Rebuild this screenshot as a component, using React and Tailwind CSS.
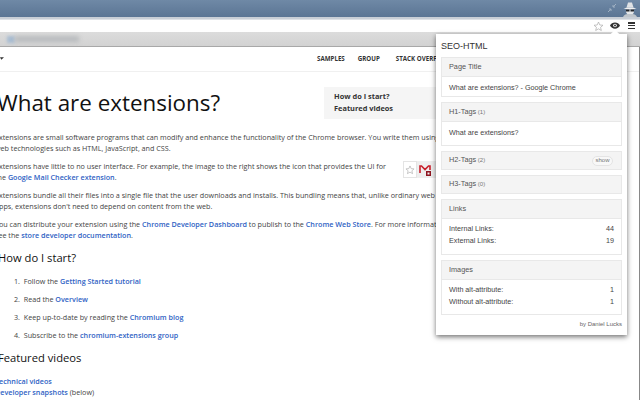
import React from 'react';

const Lnk = ({ children }) => <span className="font-semibold text-[#2f62c4]">{children}</span>;

const Section = ({ title, count, action, slim, className = '', children }) => (
    <div className="border border-[#e8e8e8]">
        <div className={`${slim ? 'h-[17px]' : 'h-[18px]'} bg-[#f4f4f4] flex items-center justify-between pl-[7px] pr-[8px] text-[#555] text-[7.3px]`}>
            <span>
                {title}
                {count && <span className="text-[6px] text-[#777]"> {count}</span>}
            </span>
            {action && (
                <span className="h-[10px] w-[21px] rounded-full border border-[#e4e4e4] bg-[#f8f8f8] flex items-center justify-center text-[6px] text-[#777]">
                    {action}
                </span>
            )}
        </div>
        {children && <div className={`border-t border-[#e8e8e8] px-[7px] text-[7.2px] text-[#444] ${className}`}>{children}</div>}
    </div>
);

const Row = ({ label, value }) => (
    <div className="flex justify-between h-[12px] items-center">
        <span>{label}</span>
        <span>{value}</span>
    </div>
);

const Popup = () => (
    <div className="absolute left-[436px] top-[34px] w-[191px] h-[301px] bg-white px-[5px] shadow-[0_2px_5px_rgba(0,0,0,0.55)] font-['Liberation_Sans',sans-serif]">
        {/* notch pointing at the toolbar icon */}
        <div className="absolute left-[176px] top-[-3px] w-[6px] h-[6px] rotate-45 bg-white" />
        <div className="h-[23px] flex items-center text-[9px] text-[#333] pt-[3px]">SEO-HTML</div>
        <div className="flex flex-col gap-[5px]">
            <Section title="Page Title" className="h-[20px] flex items-center pt-[3px]">What are extensions? - Google Chrome</Section>
            <Section title="H1-Tags" count="(1)" className="h-[24px] flex items-center">What are extensions?</Section>
            <Section title="H2-Tags" count="(2)" action="show" slim />
            <Section title="H3-Tags" count="(0)" slim />
            <Section title="Links" className="h-[36px] pt-[4px]">
                <Row label="Internal Links:" value="44" />
                <Row label="External Links:" value="19" />
            </Section>
            <Section title="Images" className="h-[35px] pt-[4px]">
                <Row label="With alt-attribute:" value="1" />
                <Row label="Without alt-attribute:" value="1" />
            </Section>
        </div>
        <div className="text-right text-[6px] text-[#666] mt-[5px]">by Daniel Lucks</div>
    </div>
);

const Star = ({ className }) => (
    <svg viewBox="0 0 16 16" className={className} fill="#fff" stroke="#a9a9a9" strokeWidth="1">
        <path d="M8 1.5l1.9 4.3 4.6.4-3.5 3 1.1 4.6L8 11.4l-4.1 2.4L5 9.2l-3.5-3 4.6-.4z" />
    </svg>
);

const BrowserChrome = () => (
    <div className="shrink-0">
        <div className="h-[17px] bg-gradient-to-b from-[#6f89a6] to-[#5b7594] flex justify-end items-start pr-[2px]">
            <svg viewBox="0 0 10 17" className="w-[10px] h-[17px]">
                <path d="M1 12l3-3M4 9H2M4 9v2M9 4L6 7M6 7h2M6 7V5" stroke="#9fb0c2" strokeWidth="1" fill="none" />
            </svg>
            <svg viewBox="0 0 16 17" className="w-[16px] h-[17px] ml-[5px]">
                <path d="M4.5 7.5L6 2.5h4l1.500 5z" fill="#dfe2e5" />
                <path d="M1.500 8.500c2-1.500 11-1.500 13 0-3 1-10 1-13 0z" fill="#f0f1f2" />
                <path d="M4 9.500h8v2c0 2-2 3.500-4 3.500s-4-1.500-4-3.500z" fill="#e6e8ea" />
                <rect x="4" y="9.500" width="3.500" height="2" fill="#22262c" />
                <rect x="8.500" y="9.500" width="3.500" height="2" fill="#22262c" />
                <path d="M1 17c1-2.500 3-3 7-3s6 .5 7 3z" fill="#bfc5cb" />
            </svg>
        </div>
        <div className="h-[3px] bg-[#c8ced6] border-b border-[#dfe2e6]" />
        <div className="h-[12px] bg-white flex items-center justify-end pr-[3px]">
            <Star className="w-[11px] h-[11px] mr-[6px]" />
            <svg viewBox="0 0 12 8" className="w-[10px] h-[7px] mr-[8px] mb-[1px]">
                <path d="M0 4c2-5 10-5 12 0-2 5-10 5-12 0z" fill="#333" />
                <circle cx="6" cy="4" r="2.2" fill="#fff" />
                <circle cx="6" cy="4" r="1.2" fill="#333" />
            </svg>
            <div className="w-[7px] h-[7px] mr-[2px] mb-[1px] flex flex-col justify-between">
                <div className="h-[1.5px] bg-[#333]" />
                <div className="h-[1.5px] bg-[#333]" />
                <div className="h-[1.5px] bg-[#333]" />
            </div>
        </div>
        <div className="h-[15px] bg-gradient-to-b from-[#dcdcdc] to-[#d2d2d2] border-b border-[#a8a8a8] flex items-center overflow-hidden">
            <div className="w-[8px] h-[7px] ml-[7px] bg-[#a9bdd2] blur-[1.5px]" />
            <div className="w-[64px] h-[6px] bg-[#b8bbbe] blur-[2px]" />
        </div>
    </div>
);

const Article = () => (
    <div className="flex-1 bg-white overflow-hidden font-['Open_Sans',sans-serif] text-[7.2px] text-[#444]">
        <div className="h-[25px] border-b border-[#f0f0f0] flex items-center whitespace-nowrap font-bold text-[6.2px] text-[#333] pb-[1px]">
            <svg viewBox="0 0 6 4" className="w-[4px] h-[3px] shrink-0">
                <path d="M0 0h6L2 4z" fill="#333" />
            </svg>
            <span className="ml-[313px]">SAMPLES</span>
            <span className="ml-[13px]">GROUP</span>
            <span className="ml-[16px]">STACK OVERFLOW</span>
        </div>
        <div className="flex justify-between items-start h-[60px] whitespace-nowrap pr-[204px]">
            <h1 className="text-[22.4px] leading-[38px] font-normal text-[#111] ml-[-3px] mt-[12px]">What are extensions?</h1>
            <div className="w-[112px] h-[32px] bg-[#f5f5f5] mt-[15px] pl-[10px] pt-[4px] font-bold text-[7.4px] leading-[11.5px] text-[#333] shrink-0">
                How do I start?<br />Featured videos
            </div>
        </div>
        <div className="flex flex-col gap-[7px] ml-[-5px] leading-[11px] whitespace-nowrap w-[441px] overflow-hidden">
            <p>Extensions are small software programs that can modify and enhance the functionality of the Chrome browser. You write them using<br />web technologies such as HTML, JavaScript, and CSS.</p>
            <p>Extensions have little to no user interface. For example, the image to the right shows the icon that provides the UI for<br />the <Lnk>Google Mail Checker extension</Lnk>.</p>
            <p>Extensions bundle all their files into a single file that the user downloads and installs. This bundling means that, unlike ordinary web<br />apps, extensions don't need to depend on content from the web.</p>
            <p>You can distribute your extension using the <Lnk>Chrome Developer Dashboard</Lnk> to publish to the <Lnk>Chrome Web Store</Lnk>. For more information,<br />see the <Lnk>store developer documentation</Lnk>.</p>
        </div>
        <h2 className="text-[11.2px] leading-[20px] text-[#111] ml-[-2px] mt-[7px] whitespace-nowrap">How do I start?</h2>
        <ol className="ml-[14px] mt-[8px] flex flex-col gap-[7px] leading-[11px] whitespace-nowrap">
            <li>1.&nbsp;&nbsp;Follow the <Lnk>Getting Started tutorial</Lnk></li>
            <li>2.&nbsp;&nbsp;Read the <Lnk>Overview</Lnk></li>
            <li>3.&nbsp;&nbsp;Keep up-to-date by reading the <Lnk>Chromium blog</Lnk></li>
            <li>4.&nbsp;&nbsp;Subscribe to the <Lnk>chromium-extensions group</Lnk></li>
        </ol>
        <h2 className="text-[11.2px] leading-[20px] text-[#111] ml-[-2px] mt-[7px] whitespace-nowrap">Featured videos</h2>
        <div className="ml-[-5px] mt-[8px] leading-[11px] whitespace-nowrap">
            <Lnk>Technical videos</Lnk><br />
            <Lnk>Developer snapshots</Lnk> (below)
        </div>
    </div>
);

export default function App() {
    return (
        <div className="relative w-[640px] h-[400px] overflow-hidden flex flex-col bg-white">
            <BrowserChrome />
            <Article />
            {/* extension icon sample next to the second paragraph */}
            <div className="absolute left-[403px] top-[161px] w-[33px] h-[17px] bg-[#eeeeee] flex items-center">
                <div className="w-[14px] h-[17px] bg-white border border-[#e4e4e4] flex items-center justify-center">
                    <Star className="w-[10px] h-[10px]" />
                </div>
                <svg viewBox="0 0 12 12" className="w-[12px] h-[12px] ml-[2px]">
                    <path d="M1 9V2h1.500L6 5.500 9.500 2H11v4" fill="none" stroke="#c8202c" strokeWidth="1.600" />
                    <rect x="7" y="7" width="5" height="5" fill="#8e1420" />
                    <rect x="8.500" y="8.500" width="2" height="2" fill="#eee" />
                </svg>
            </div>
            <Popup />
            <div className="absolute right-0 top-[47px] bottom-0 w-[1px] bg-[#888]" />
        </div>
    );
}
